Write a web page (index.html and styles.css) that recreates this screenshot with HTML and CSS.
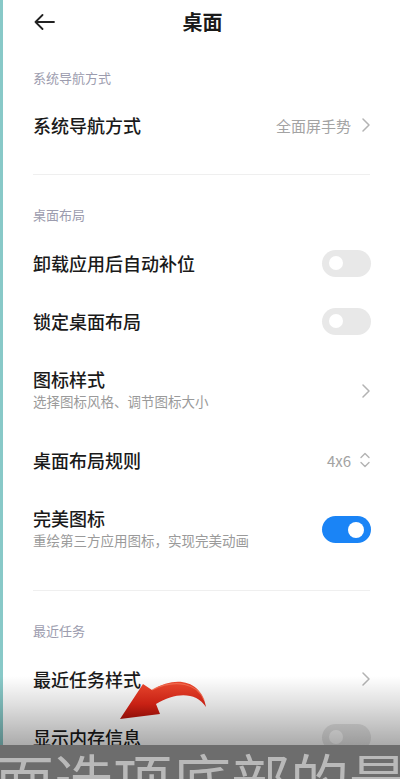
FILE: index.html
```html
<!DOCTYPE html>
<html lang="zh-CN">
<head>
<meta charset="utf-8">
<title>桌面</title>
<link rel="stylesheet" href="styles.css">
</head>
<body>
<div class="app">
  <header class="topbar">
    <span class="back">
      <svg width="22" height="16" viewBox="0 0 22 16"><path d="M21 8H2.5M9.5 1L2.5 8l7 7" fill="none" stroke="#222" stroke-width="1.8" stroke-linecap="round" stroke-linejoin="round"/></svg>
    </span>
    <h1 class="title">桌面</h1>
    <span></span>
  </header>

  <section class="group">
    <div class="group-label">系统导航方式</div>
    <div class="row">
      <div class="row-text"><div class="row-title">系统导航方式</div></div>
      <div class="row-end"><span class="value">全面屏手势</span>
        <svg class="chev" width="8" height="14" viewBox="0 0 8 14"><path d="M1 1l6 6-6 6" fill="none" stroke="#b3b3b3" stroke-width="1.5" stroke-linecap="round" stroke-linejoin="round"/></svg>
      </div>
    </div>
  </section>
  <div class="divider"></div>

  <section class="group">
    <div class="group-label">桌面布局</div>
    <div class="row">
      <div class="row-text"><div class="row-title">卸载应用后自动补位</div></div>
      <span class="toggle"><span class="knob"></span></span>
    </div>
    <div class="row">
      <div class="row-text"><div class="row-title">锁定桌面布局</div></div>
      <span class="toggle"><span class="knob"></span></span>
    </div>
    <div class="row tall">
      <div class="row-text"><div class="row-title">图标样式</div><div class="row-sub">选择图标风格、调节图标大小</div></div>
      <svg class="chev" width="8" height="14" viewBox="0 0 8 14"><path d="M1 1l6 6-6 6" fill="none" stroke="#b3b3b3" stroke-width="1.5" stroke-linecap="round" stroke-linejoin="round"/></svg>
    </div>
    <div class="row">
      <div class="row-text"><div class="row-title">桌面布局规则</div></div>
      <div class="row-end"><span class="value">4x6</span>
        <svg class="updown" width="10" height="16" viewBox="0 0 10 16"><path d="M1 5.5l4-4 4 4M1 10.5l4 4 4-4" fill="none" stroke="#b3b3b3" stroke-width="1.4" stroke-linecap="round" stroke-linejoin="round"/></svg>
      </div>
    </div>
    <div class="row tall">
      <div class="row-text"><div class="row-title">完美图标</div><div class="row-sub">重绘第三方应用图标，实现完美动画</div></div>
      <span class="toggle on"><span class="knob"></span></span>
    </div>
  </section>
  <div class="divider"></div>

  <section class="group">
    <div class="group-label">最近任务</div>
    <div class="row">
      <div class="row-text"><div class="row-title">最近任务样式</div></div>
      <svg class="chev" width="8" height="14" viewBox="0 0 8 14"><path d="M1 1l6 6-6 6" fill="none" stroke="#b3b3b3" stroke-width="1.5" stroke-linecap="round" stroke-linejoin="round"/></svg>
    </div>
    <div class="row">
      <div class="row-text"><div class="row-title">显示内存信息</div></div>
      <span class="toggle"><span class="knob"></span></span>
    </div>
  </section>
</div>

<div class="shade"></div>
<svg class="arrow" width="400" height="779" viewBox="0 0 400 779">
  <defs>
    <linearGradient id="red" x1="0" y1="0" x2="0" y2="1">
      <stop offset="0" stop-color="#e8482e"/>
      <stop offset="0.6" stop-color="#c82114"/>
      <stop offset="1" stop-color="#8e0e08"/>
    </linearGradient>
  </defs>
  <path d="M206 707C202 682 178 674 152 690L143 684L120 719L160 714L156 704C176 692 196 692 206 707Z" fill="url(#red)"/>
  <path d="M152 690C176 678 198 684 204 700" fill="none" stroke="#f27a5e" stroke-width="1.2" opacity="0.7"/>
</svg>
<div class="caption"><span>面选项底部的最</span></div>
</body>
</html>
```

FILE: styles.css
```css
html, body {
  margin: 0;
  padding: 0;
  height: 779px;
  overflow: hidden;
  background: #ffffff;
}
body {
  position: relative;
  font-family: "Noto Sans CJK SC", "Noto Sans", sans-serif;
  color: #1a1a1a;
}
.app {
  border-left: 3px solid #88c9c8;
  height: 779px;
  box-sizing: border-box;
  padding: 0 30px 0 30px;
}
.topbar {
  height: 46px;
  display: grid;
  grid-template-columns: 1fr auto 1fr;
  align-items: center;
}
.back {
  display: flex;
  align-items: center;
  height: 46px;
}
.back svg {
  margin-top: -2px;
}
.title {
  margin: 0;
  font-size: 20px;
  font-weight: 700;
  line-height: 28px;
  color: #1a1a1a;
  margin-top: -2px;
  transform: translateX(1px);
}
.group-label {
  margin-top: 22px;
  height: 20px;
  line-height: 20px;
  font-size: 13px;
  color: #9c9cae;
  margin-bottom: 8px;
}
.divider + .group .group-label {
  margin-top: 30px;
  margin-bottom: 9px;
}
.row {
  height: 58px;
  display: flex;
  align-items: center;
  justify-content: space-between;
}
.row.tall {
  height: 81px;
}
.row-title {
  font-size: 18px;
  font-weight: 500;
  line-height: 24px;
  color: #1a1a1a;
}
.row-sub {
  font-size: 13.5px;
  line-height: 20px;
  color: #9a9a9a;
  margin-top: 0;
}
.tall .row-text {
  margin-top: -3px;
}
.row-end {
  display: flex;
  align-items: center;
  gap: 11px;
}
.value {
  font-size: 15px;
  color: #a3a3a3;
}
.chev {
  display: block;
  flex: none;
}
.updown {
  display: block;
  margin-left: -2px;
}
.toggle {
  flex: none;
  position: relative;
  width: 49px;
  height: 27px;
  border-radius: 14px;
  background: #e8e8e8;
  margin-right: -1px;
}
.toggle .knob {
  position: absolute;
  left: 7px;
  top: 6.5px;
  width: 14px;
  height: 14px;
  border-radius: 50%;
  background: #ffffff;
}
.toggle.on {
  background: #1a84f6;
}
.toggle.on .knob {
  left: auto;
  right: 7px;
  top: 5.5px;
  width: 16px;
  height: 16px;
}
.divider {
  height: 1px;
  background: #efefef;
  margin-top: 20px;
}
.shade {
  position: absolute;
  left: 0;
  top: 676px;
  width: 400px;
  height: 69px;
  background: linear-gradient(to bottom, rgba(0,0,0,0) 0%, rgba(0,0,0,0.12) 40%, rgba(0,0,0,0.33) 100%);
  pointer-events: none;
}
.arrow {
  position: absolute;
  left: 0;
  top: 0;
  pointer-events: none;
}
.caption {
  position: absolute;
  left: 0;
  top: 745px;
  width: 400px;
  height: 34px;
  background: #6d6d6d;
  overflow: hidden;
  white-space: nowrap;
}
.caption span {
  position: absolute;
  left: -5px;
  top: 4px;
  font-size: 59px;
  line-height: 59px;
  color: #b9b9b9;
  font-weight: 400;
}
```
